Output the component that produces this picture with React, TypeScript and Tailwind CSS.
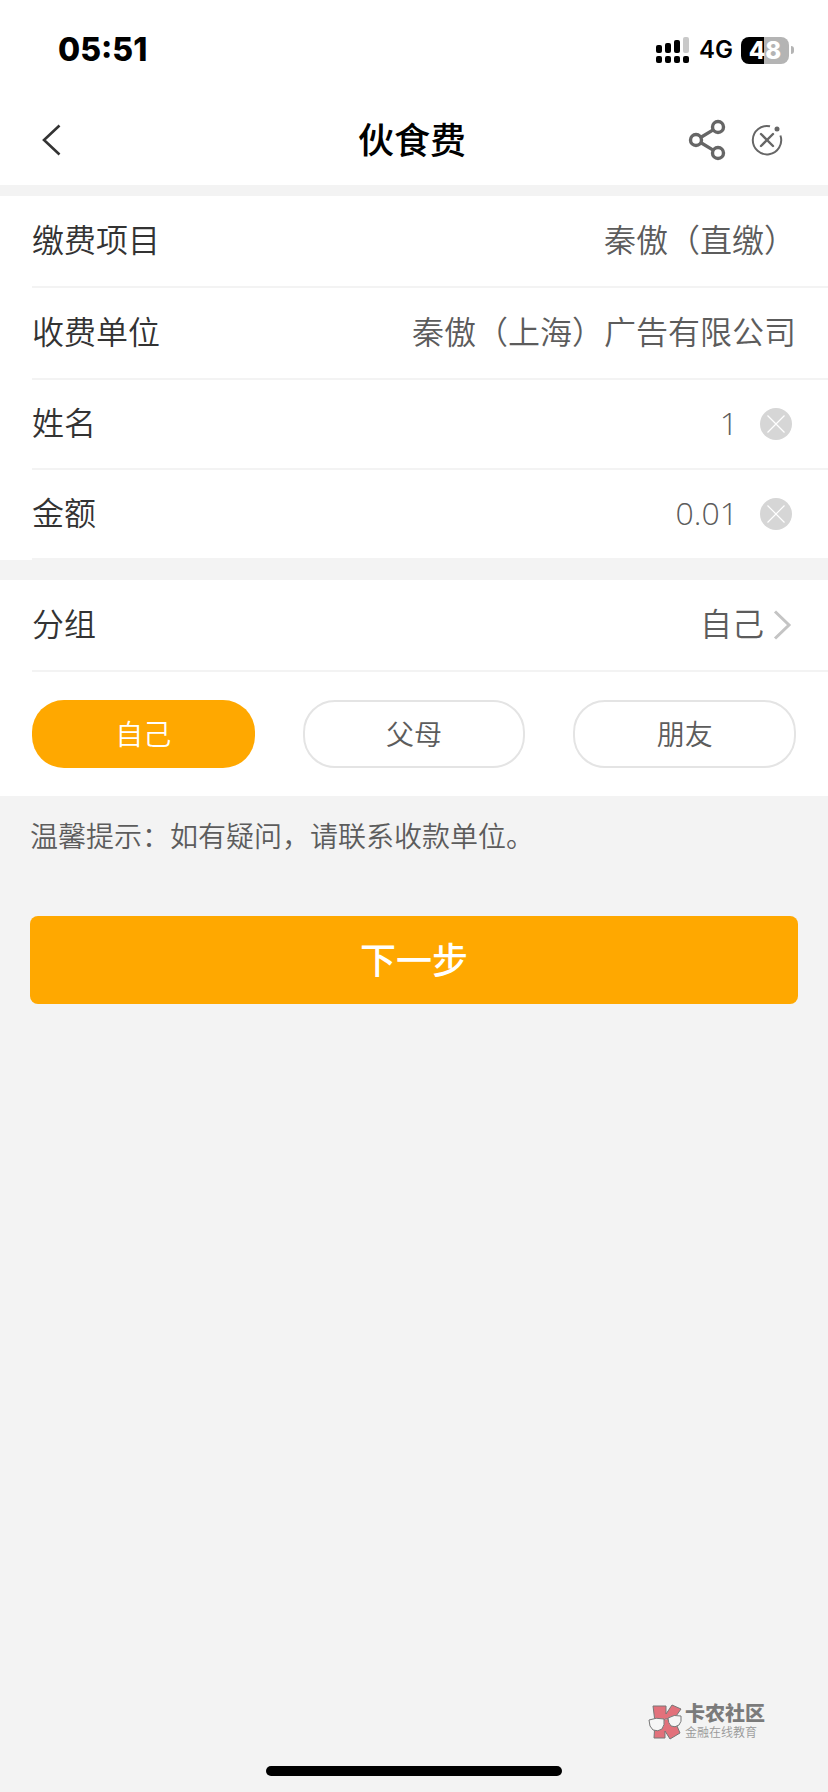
import { useState } from 'react'

const groups = ['自己', '父母', '朋友']

const StatusBar = () => (
  <div className="flex h-[96px] items-center justify-between pt-[4px] pr-[34px] pl-[58px] font-['Inter',sans-serif]">
    <span className="text-[32px] leading-[40px] font-extrabold">05:51</span>
    <div className="flex items-center">
      {/* 双卡信号 */}
      <svg width="34" height="28" viewBox="0 0 34 28" aria-hidden="true">
        <rect x="0" y="9" width="6" height="8" rx="2" />
        <rect x="9" y="7" width="6" height="10" rx="2" />
        <rect x="18" y="4" width="6" height="13" rx="2" />
        <rect x="27" y="1" width="6" height="16" rx="2" fill="#c9c9c9" />
        <rect x="0" y="20" width="6" height="7" rx="2" />
        <rect x="9" y="20" width="6" height="7" rx="2" />
        <rect x="18" y="20" width="6" height="7" rx="2" />
        <rect x="27" y="20" width="6" height="7" rx="2" />
      </svg>
      <span className="ml-[9px] text-[24px] leading-[28px] font-semibold">4G</span>
      {/* 电量 */}
      <div className="ml-[8px] flex h-[27px] w-[48px] items-center justify-center rounded-[8px] bg-linear-to-r from-black from-48% to-[#b4b4b4] to-48% text-[24px] leading-[27px] font-extrabold text-white">
        48
      </div>
      <div className="ml-[2px] h-[8px] w-[3px] rounded-r-full bg-[#b4b4b4]" />
    </div>
  </div>
)

const Header = () => (
  <header className="grid h-[89px] grid-cols-[1fr_auto_1fr] items-center pr-[44px] pb-[2px] pl-[40px]">
    <button aria-label="返回" className="justify-self-start">
      <svg width="24" height="34" viewBox="0 0 24 34" fill="none" stroke="#333" strokeWidth="2.6">
        <path d="M19.500 2.500 4 17l15.500 14.500" />
      </svg>
    </button>
    <h1 className="pb-[4px] text-[36px] leading-[48px] font-medium">伙食费</h1>
    <div className="flex items-center gap-[24px] justify-self-end">
      <button aria-label="分享">
        <svg width="38" height="42" viewBox="0 0 38 42" fill="none" stroke="#666" strokeWidth="3.400">
          <circle cx="8" cy="21" r="5.500" />
          <circle cx="30" cy="8" r="5.500" />
          <circle cx="30" cy="34" r="5.500" />
          <path d="m13 18.200 12.200-7.300M13 23.800l12.200 7.300" />
        </svg>
      </button>
      <button aria-label="关闭">
        <svg width="34" height="34" viewBox="0 0 34 34" fill="none" stroke="#666" strokeWidth="2">
          <path d="M20 3.300A14.200 14.200 0 1 0 30.400 12.500" />
          <path d="m11 11 12 12M23 11 11 23" strokeWidth="2.400" strokeLinecap="round" />
          <circle cx="27" cy="6" r="2.500" fill="#666" stroke="none" />
        </svg>
      </button>
    </div>
  </header>
)

const InfoRow = ({ label, value }: { label: string; value: string }) => (
  <div className="ml-[32px] flex h-[92px] items-center justify-between border-b-2 border-[#f3f3f3] pr-[32px] pb-[6px]">
    <span>{label}</span>
    <span className="text-[#5c5c5c]">{value}</span>
  </div>
)

interface InputRowProps {
  id: string
  label: string
  value: string
  onChange: (value: string) => void
}

const InputRow = ({ id, label, value, onChange }: InputRowProps) => (
  <div className="ml-[32px] flex h-[90px] items-center border-b-2 border-[#f3f3f3] pr-[36px]">
    <label htmlFor={id} className="pb-[6px]">{label}</label>
    <input
      id={id}
      value={value}
      onChange={e => onChange(e.target.value)}
      className="min-w-0 flex-1 pb-[2px] text-right font-['Open_Sans','Noto_Sans_CJK_SC',sans-serif] text-[#5c5c5c] outline-none"
    />
    <button aria-label="清除" onClick={() => onChange('')} className="ml-[22px]">
      <svg width="32" height="32" viewBox="0 0 32 32" stroke="#fff" strokeWidth="1.200">
        <circle cx="16" cy="16" r="16" fill="#d6d6d6" stroke="none" />
        <path d="m7.500 7.500 17 17M24.500 7.500l-17 17" />
      </svg>
    </button>
  </div>
)

const Watermark = () => (
  <div className="flex items-center gap-[3px] self-end pr-[63px]">
    <svg width="34" height="36" viewBox="0 0 34 36" stroke="#777" strokeWidth="1" aria-hidden="true">
      <path d="M5 2h13v8l6-9 9 4-7 10 6 14-10 6-5-8v7H6l1-16z" fill="#e2717b" />
      <path d="M1 16q7-3 15-1 1 6-2 10-4 3-9 1-4-3-4-10z" fill="#f6f6f6" />
      <path d="M20 14q6-4 13-2 1 6-2 9-4 3-8 1-3-3-3-8zM16 16q2-2 4-1" fill="#f6f6f6" />
    </svg>
    <div className="whitespace-nowrap">
      <p className="text-[20px] leading-[20px] font-black text-[#7b7b7b]">卡农社区</p>
      <p className="text-[12px] leading-[18px] text-[#999]">金融在线教育</p>
    </div>
  </div>
)

const App = () => {
  const [name, setName] = useState('1')
  const [amount, setAmount] = useState('0.01')
  const [group, setGroup] = useState('自己')

  return (
    <div className="flex min-h-screen flex-col bg-[#f3f3f3] font-['Noto_Sans_CJK_SC',sans-serif] text-[32px] leading-[48px] font-[350] text-[#333]">
      <div className="bg-white text-black">
        <StatusBar />
        <Header />
      </div>

      <main className="flex flex-1 flex-col">
        <section className="mt-[11px] bg-white">
          <InfoRow label="缴费项目" value="秦傲（直缴）" />
          <InfoRow label="收费单位" value="秦傲（上海）广告有限公司" />
          <InputRow id="name" label="姓名" value={name} onChange={setName} />
          <InputRow id="amount" label="金额" value={amount} onChange={setAmount} />
        </section>

        {/* 分组 */}
        <section className="mt-[20px] bg-white">
          <div className="ml-[32px] flex h-[92px] items-center justify-between border-b-2 border-[#f3f3f3] pr-[36px]">
            <span className="pb-[6px]">分组</span>
            <button className="flex items-center gap-[8px] text-[#5c5c5c]">
              <span className="pb-[6px]">{group}</span>
              <svg width="20" height="32" viewBox="0 0 20 32" fill="none" stroke="#c4c4c4" strokeWidth="3">
                <path d="m3 2.500 14 13.500L3 29.500" />
              </svg>
            </button>
          </div>
          <div className="grid grid-cols-3 gap-[48px] px-[32px] py-[28px] text-[28px]">
            {groups.map(item => (
              <button
                key={item}
                onClick={() => setGroup(item)}
                className={
                  item === group
                    ? 'h-[68px] rounded-[32px] bg-[#ffa800] pb-[2px] text-white'
                    : 'h-[68px] rounded-[32px] border-2 border-[#e4e4e4] pb-[2px] text-[#5c5c5c]'
                }
              >
                {item}
              </button>
            ))}
          </div>
        </section>

        <p className="mt-[15px] px-[30px] text-[28px] text-[#5c5c5c]">温馨提示：如有疑问，请联系收款单位。</p>

        <button className="mx-[30px] mt-[57px] h-[88px] rounded-[8px] bg-[#ffa800] pb-[4px] text-[36px] font-medium text-white">
          下一步
        </button>
      </main>

      <footer className="flex flex-col items-center gap-[25px] pb-[16px]">
        <Watermark />
        <div className="h-[10px] w-[296px] rounded-full bg-black" />
      </footer>
    </div>
  )
}

export default App
